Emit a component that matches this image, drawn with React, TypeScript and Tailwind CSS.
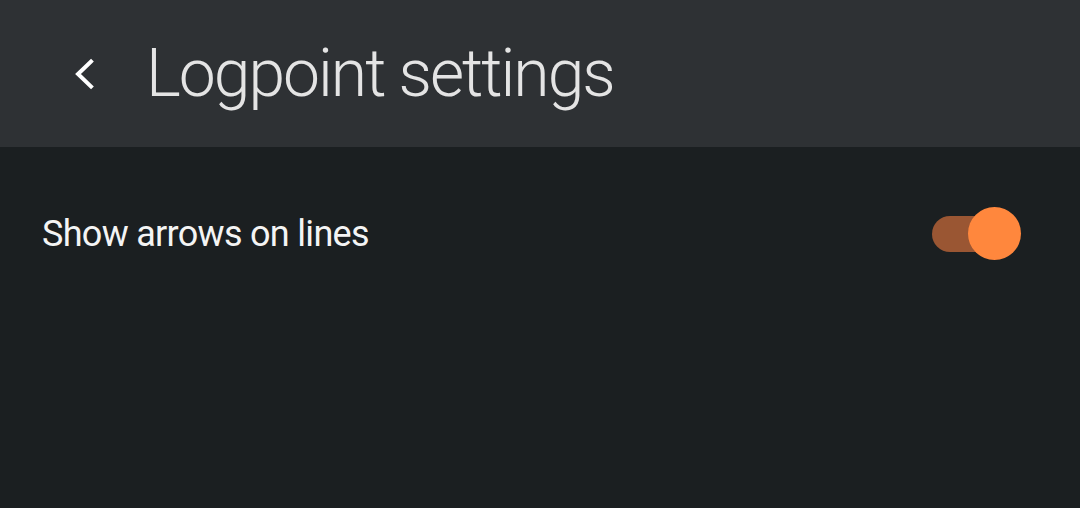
import { useState } from "react";

function Toggle({ on, onChange }: { on: boolean; onChange: (v: boolean) => void }) {
  return (
    <button
      type="button"
      role="switch"
      aria-checked={on}
      onClick={() => onChange(!on)}
      className="relative flex h-[53px] w-[90px] items-center"
    >
      <span
        className={`ml-[1px] h-[36px] w-[70px] rounded-full ${on ? "bg-[#9a5633]" : "bg-[#5b5f62]"}`}
      />
      <span
        className={`absolute top-0 h-[53px] w-[53px] rounded-full ${
          on ? "left-[37px] bg-[#ff873d]" : "left-0 bg-[#c9cccf]"
        }`}
      />
    </button>
  );
}

export default function App() {
  const [arrows, setArrows] = useState(true);

  return (
    <div className="flex h-[508px] w-[1080px] flex-col bg-[#1b1f21] font-['Roboto',sans-serif]">
      {/* Top bar */}
      <header className="flex h-[147px] shrink-0 items-center bg-[#2e3134]">
        <button type="button" className="ml-[72px] flex h-[32px] w-[24px] items-center text-white">
          <svg width="24" height="32" viewBox="0 0 24 32" fill="none" aria-hidden>
            <path d="M19 3.5 6 16l13 12.5" stroke="currentColor" strokeWidth="4" strokeLinecap="square" />
          </svg>
        </button>
        <h1 className="ml-[50px] text-[66px] font-light leading-none tracking-[-2px] text-[#e4e4e4]">
          Logpoint settings
        </h1>
      </header>

      {/* Settings list */}
      <div className="flex items-center justify-between pl-[42px] pr-[59px] pt-[60px]">
        <span className="text-[36px] leading-none tracking-[-0.7px] text-[#f4f4f4]">Show arrows on lines</span>
        <Toggle on={arrows} onChange={setArrows} />
      </div>
    </div>
  );
}
